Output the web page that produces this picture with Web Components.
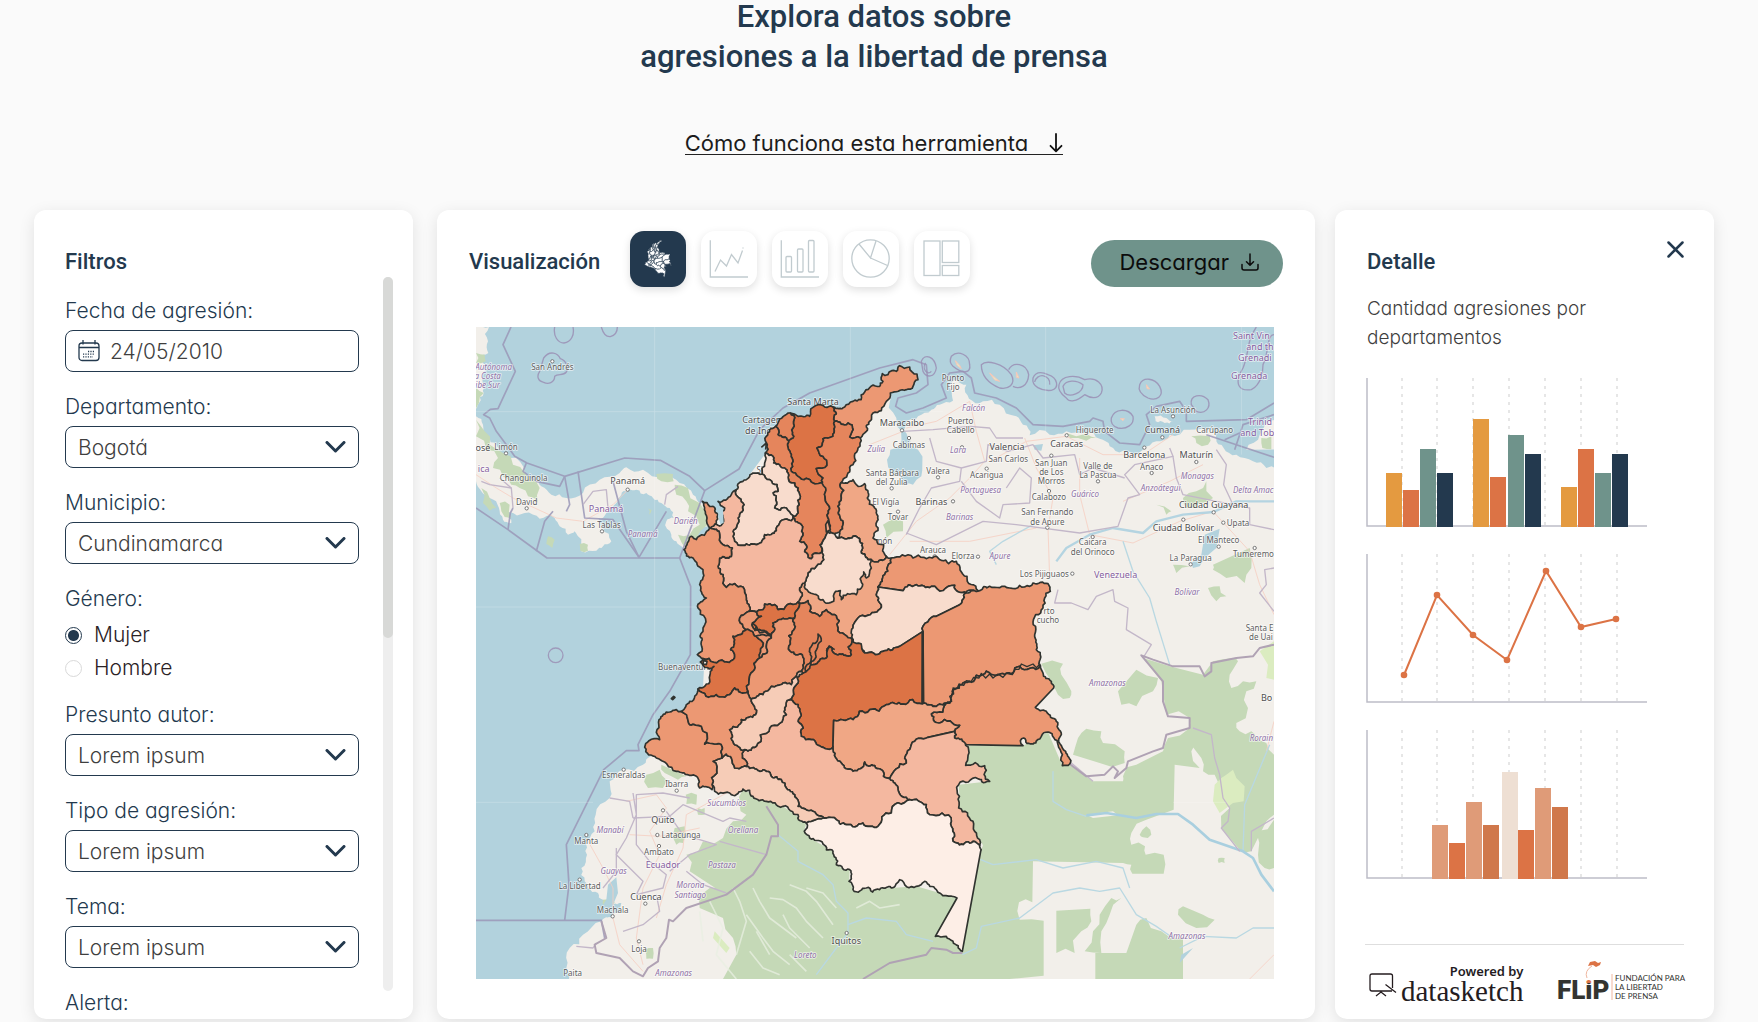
<!DOCTYPE html>
<html lang="es">
<head>
<meta charset="utf-8">
<meta name="viewport" content="width=device-width, initial-scale=1">
<title>Explora datos sobre agresiones a la libertad de prensa</title>
<style>
  body {
    margin: 0;
    background: #fafafa;
    color: #3f3f3f;
    font-family: Inter, "Noto Sans", sans-serif;
    font-feature-settings: "cv11";
    --navy: #23394e;
    --heading: Roboto, "Liberation Sans", sans-serif;
  }
</style>
</head>
<body>
<explorer-page></explorer-page>
<script>
const define = (name, html, setup) => {
  const template = document.createElement('template');
  template.innerHTML = html;
  customElements.define(name, class extends HTMLElement {
    constructor() {
      super();
      this.attachShadow({ mode: 'open' }).append(template.content.cloneNode(true));
    }
    connectedCallback() {
      if (setup && !this.ready) { this.ready = true; setup(this, this.shadowRoot); }
    }
  });
};

/* ---------- Departments of Colombia: fill, then outline ---------- */
const A = '#ec9873', B = '#e5855c', C = '#dc7345', D = '#f0a785', E = '#f4b8a0', F = '#f8dccd', G = '#f6ccb7', H = '#fdeee6';
const departments = [
  [A, '1090,257 1125,257 1150,240 1185,212 1230,195 1240,180 1238,157 1255,160 1266,148 1280,150 1290,133 1320,137 1342,158 1345,175 1330,195 1310,205 1262,215 1250,240 1235,268 1210,275 1200,300 1190,330 1172,350 1140,347 1150,325 1135,305 1095,300'],
  [C, '962,275 985,285 1020,285 1030,258 1045,250 1065,257 1090,257 1095,300 1090,345 1060,352 1042,380 1060,405 1072,432 1040,442 1060,470 1068,500 1030,485 985,465 965,450 970,420 965,400 955,378 957,358 972,345 973,295'],
  [B, '962,275 925,305 918,315 925,340 957,358 972,345 973,295'],
  [B, '918,315 900,325 890,345 893,370 887,395 910,405 912,425 945,440 955,455 958,480 985,500 992,525 985,575 970,583 995,610 990,660 1010,672 1015,708 1025,712 1058,688 1062,655 1075,632 1078,600 1075,550 1068,500 1030,485 985,465 965,450 970,420 965,400 955,378 957,358 925,340'],
  [B, '1095,300 1135,305 1150,325 1140,347 1172,350 1165,380 1150,430 1125,470 1113,485 1115,530 1105,555 1112,590 1120,610 1110,632 1080,628 1078,600 1075,550 1068,500 1060,470 1040,442 1072,432 1060,405 1042,380 1060,352 1090,345'],
  [D, '1113,485 1150,475 1160,490 1185,487 1193,530 1215,560 1222,600 1210,650 1225,668 1242,670 1250,705 1215,722 1205,715 1175,695 1170,660 1150,645 1110,650 1110,632 1120,610 1112,590 1105,555 1115,530'],
  [D, '1005,785 1015,755 1040,735 1062,715 1058,688 1062,655 1110,650 1150,645 1170,660 1175,695 1205,715 1215,722 1250,705 1265,710 1245,760 1225,797 1220,820 1235,850 1222,872 1165,890 1150,920 1148,955 1125,940 1105,920 1095,880 1070,865 1050,885 1020,870 1015,838 985,842 990,800'],
  [F, '1075,632 1110,650 1150,645 1170,660 1175,695 1205,715 1205,740 1190,770 1182,752 1178,795 1160,820 1115,835 1112,808 1098,810 1092,840 1060,835 1040,820 1012,805 1005,785 1015,755 1040,735 1062,715 1058,688 1062,655'],
  [F, '887,395 910,405 912,425 945,440 955,455 958,480 985,500 992,525 985,575 970,583 950,560 915,560 910,515 925,510 922,490 900,475 878,458 885,425'],
  [F, '878,458 850,455 820,480 800,505 808,530 823,550 805,590 790,630 795,660 820,672 860,670 885,640 920,628 930,605 965,598 970,583 950,560 915,560 910,515 925,510 922,490 900,475'],
  [E, '800,505 785,520 745,540 765,560 760,605 745,612 722,620 750,640 788,680 785,705 750,710 745,735 762,770 770,798 820,797 830,830 838,870 855,870 880,865 885,848 915,850 925,865 985,842 990,800 1005,785 1015,755 1040,735 1062,715 1058,688 1025,712 1015,708 1010,672 990,660 995,610 970,583 965,598 930,605 920,628 885,640 860,670 820,672 795,660 790,630 805,590 823,550 808,530'],
  [A, '698,540 720,555 745,580 740,605 722,620 750,640 788,680 785,705 750,710 745,735 762,770 770,798 820,797 830,830 838,870 810,890 812,905 830,925 812,940 790,945 783,985 795,1005 765,1022 700,1012 683,1000 697,990 695,960 700,930 685,860 710,830 690,790 700,745 670,710 643,685 665,645 680,655 720,620 712,590'],
  [C, '885,848 915,850 925,865 985,842 975,890 945,893 910,905 905,940 870,925 855,925 848,905 875,885 855,870 880,865'],
  [A, '838,870 855,870 875,885 848,905 855,925 870,925 905,940 905,950 860,945 830,925 812,905 810,890'],
  [C, '830,925 860,945 870,1010 850,1050 838,1080 835,1110 795,1100 780,1120 740,1120 685,1103 720,1075 722,1050 733,1035 705,1038 692,1022 700,1012 765,1022 795,1005 783,985 790,945 812,940'],
  [A, '860,945 905,950 890,975 892,995 870,1010'],
  [A, '905,940 910,905 945,893 975,890 968,930 962,990 998,1000 995,1050 965,1090 940,1085 905,1095 880,1120 845,1133 835,1110 838,1080 850,1050 870,1010 892,995 890,975 905,950'],
  [B, '985,842 1015,838 1020,870 1050,885 1070,865 1095,880 1105,920 1125,940 1148,955 1145,1000 1110,998 1078,975 1070,1010 1030,1030 1000,1055 995,1050 998,1000 962,990 968,930 975,890'],
  [B, '1045,938 1052,945 1045,970 1038,1000 1022,1045 1008,1050 1022,1000 1030,965'],
  [A, '1265,710 1330,710 1395,705 1415,717 1460,720 1492,765 1525,808 1490,815 1455,792 1385,795 1340,790 1300,808 1225,797 1245,760'],
  [F, '1225,797 1300,808 1340,790 1385,795 1455,792 1490,815 1470,850 1400,885 1360,930 1290,975 1245,988 1200,993 1185,995 1150,960 1150,920 1165,890 1222,872 1235,850 1220,820'],
  [A, '1490,815 1530,808 1560,795 1620,800 1680,795 1690,785 1735,787 1742,810 1725,830 1720,860 1698,880 1695,940 1700,985 1712,1033 1650,1035 1630,1055 1580,1062 1520,1062 1480,1085 1450,1105 1440,1145 1400,1155 1362,1148 1360,930 1400,885 1470,850'],
  [C, '1148,955 1185,995 1200,993 1245,988 1290,975 1360,930 1358,1148 1300,1148 1250,1150 1200,1165 1150,1195 1092,1197 1090,1275 1060,1278 1025,1255 995,1245 985,1200 985,1150 960,1135 980,1090 1000,1055 1030,1030 1070,1010 1078,975 1110,998 1145,1000'],
  [A, '1712,1033 1720,1055 1745,1080 1752,1100 1697,1158 1730,1170 1760,1200 1775,1240 1788,1290 1800,1328 1778,1333 1765,1270 1735,1232 1715,1245 1690,1268 1672,1266 1662,1250 1652,1258 1660,1273 1490,1270 1455,1250 1455,1230 1470,1212 1410,1205 1385,1178 1440,1145 1450,1105 1480,1085 1520,1062 1580,1062 1630,1055 1650,1035'],
  [D, '1092,1197 1150,1195 1200,1165 1250,1150 1300,1148 1358,1148 1400,1155 1440,1145 1385,1178 1410,1205 1470,1212 1455,1230 1375,1248 1325,1270 1310,1325 1260,1372 1235,1345 1215,1333 1185,1322 1150,1350 1115,1325 1090,1285 1090,1275'],
  [E, '1455,1230 1455,1250 1488,1272 1488,1332 1545,1333 1560,1380 1525,1372 1467,1390 1467,1460 1510,1500 1515,1530 1530,1555 1530,1572 1510,1560 1490,1562 1450,1560 1445,1500 1380,1480 1370,1450 1320,1435 1285,1405 1260,1372 1310,1325 1325,1270 1375,1248'],
  [E, '985,1150 960,1135 945,1160 950,1180 900,1220 860,1275 825,1285 818,1310 830,1335 870,1350 905,1365 935,1375 950,1400 980,1430 985,1455 1030,1470 1070,1490 1100,1495 1130,1510 1180,1505 1225,1515 1265,1475 1320,1435 1285,1405 1260,1372 1235,1345 1215,1333 1185,1322 1150,1350 1115,1325 1090,1285 1090,1275 1060,1278 1025,1255 995,1245 985,1200'],
  [H, '1010,1505 1070,1490 1100,1495 1130,1510 1180,1505 1225,1515 1265,1475 1320,1435 1370,1450 1380,1480 1445,1500 1450,1560 1490,1562 1510,1560 1530,1572 1533,1590 1478,1890 1450,1860 1430,1845 1397,1845 1462,1730 1400,1705 1365,1680 1340,1695 1290,1675 1265,1700 1230,1705 1190,1700 1150,1705 1138,1680 1140,1645 1100,1630 1090,1590 1060,1568 1020,1550'],
  [G, '730,1320 757,1310 770,1298 785,1310 795,1340 830,1335 870,1350 905,1365 935,1375 950,1400 980,1430 985,1455 1030,1470 1070,1490 1010,1505 985,1480 940,1455 890,1440 850,1425 820,1403 785,1420 735,1410 727,1390'],
  [A, '635,1170 620,1165 600,1172 568,1195 562,1225 570,1255 538,1258 525,1278 560,1310 620,1350 665,1362 690,1400 727,1405 727,1390 730,1320 757,1310 757,1275 735,1268 705,1268 712,1235 695,1215 660,1210'],
  [A, '685,1103 740,1120 780,1120 795,1100 835,1110 845,1133 858,1180 815,1195 780,1225 790,1260 825,1285 818,1310 830,1335 795,1340 785,1310 770,1298 757,1310 757,1275 735,1268 705,1268 712,1235 695,1215 660,1210 635,1170 660,1140'],
  [G, '845,1133 880,1120 905,1095 940,1085 965,1090 995,1050 1000,1055 980,1090 960,1135 945,1160 950,1180 900,1220 860,1275 825,1285 790,1260 780,1225 815,1195 858,1180']
];
const fixed = n => Math.round(n * 10) / 10;
/* Splits each edge at a displaced midpoint. The shift depends only on the two
   end points, so the border of two neighbours stays the same line. */
const roughen = (points, depth) => {
  if (!depth) return points;
  const out = [];
  points.forEach((p, i) => {
    const q = points[(i + 1) % points.length];
    out.push(p);
    const len = Math.hypot(q[0] - p[0], q[1] - p[1]);
    if (len < 9 || len > 75) return;
    const flip = p[0] < q[0] || (p[0] === q[0] && p[1] < q[1]);
    const [a, b] = flip ? [p, q] : [q, p];
    const s = Math.sin(a[0] * 12.9898 + a[1] * 78.233 + b[0] * 37.719 + b[1] * 4.581) * 43758.5453;
    const k = ((s - Math.floor(s)) - 0.5) * 0.5;
    out.push([fixed((a[0] + b[0]) / 2 - (b[1] - a[1]) * k), fixed((a[1] + b[1]) / 2 + (b[0] - a[0]) * k)]);
  });
  return roughen(out, depth - 1);
};
const outline = (text, depth) => 'M' + roughen(text.trim().split(/\s+/).map(p => p.split(',').map(Number)), depth).map(p => p.join(' ')).join('L') + 'Z';
const departmentPaths = depth => departments.map(([fill, pts]) => `<path fill="${fill}" d="${outline(pts, depth)}"/>`).join('');

/* ---------- Base map ---------- */
const land = [
  '19,17 58,17 55,60 56,95 40,100 46,130 40,160 47,190 42,215 28,245 19,262',
  '19,285 40,310 55,345 80,370 120,410 165,455 190,470 215,495 245,520 290,530 340,515 390,475 450,455 470,438 520,445 580,460 630,485 670,520 695,545 715,590 715,615 680,650 655,690 640,680 620,660 605,640 590,600 612,590 600,560 575,545 550,530 530,515 500,505 475,508 455,520 440,545 410,575 385,590 400,620 425,660 400,675 380,688 335,690 325,645 315,630 295,640 270,615 255,590 210,592 165,575 120,572 125,605 100,595 88,560 60,530 35,510 19,480',
  '900,380 1120,255 1230,200 1266,222 1280,290 1302,330 1312,300 1345,285 1385,265 1410,250 1450,238 1440,200 1462,175 1490,190 1498,232 1540,240 1590,250 1640,285 1660,310 1680,342 1740,340 1790,330 1850,335 1890,352 1920,375 1960,388 2020,385 2060,360 2100,340 2160,325 2225,325 2240,350 2262,380 2300,400 2350,420 2390,440 2450,452 2450,2000 280,2000 290,1940 300,1880 340,1840 395,1800 425,1788 455,1745 430,1750 400,1735 385,1715 355,1700 345,1680 335,1640 352,1600 340,1560 375,1530 378,1480 420,1430 420,1380 460,1345 520,1330 545,1305 700,1100 720,700 720,620',
  '2330,385 2370,340 2385,310 2440,300 2440,384', '2055,285 2090,290 2112,300 2085,305 2058,300'
];
const green = [
  '19,95 45,100 48,120 19,125', '19,200 42,215 28,245 19,262',
  '19,295 45,330 60,370 100,395 130,430 165,455 190,470 210,500 205,545 175,525 150,500 125,490 100,465 70,440 85,410 50,385 19,345',
  '35,500 60,530 80,560 60,568 40,545', '90,545 120,550 125,590 95,570',
  '235,645 255,655 248,680 230,668', '560,458 610,458 612,480 575,480', '615,490 655,500 690,545 712,590 712,612 680,650 655,690 625,640 660,640 690,610 655,570 650,540 620,520', '330,668 355,670 355,688 332,688', '535,560 546,565 538,580',
  '1790,335 1850,337 1880,350 1850,358 1800,350', '2140,530 2180,510 2210,480 2230,530 2190,545 2150,560', '2230,730 2340,680 2345,740 2325,785 2270,770 2230,745', '2215,800 2250,795 2270,825 2240,840', '2165,345 2220,345 2215,370 2180,365', '1240,610 1300,600 1300,630 1250,650', '2060,550 2105,570 2090,580', '2375,350 2405,345 2405,384 2378,380', '2110,730 2160,735 2120,755',
  '530,1360 570,1345 590,1375 580,1400 535,1400', '575,1330 650,1365 625,1375 585,1355', '648,1420 682,1420 680,1450 650,1448', '685,1460 705,1460 705,1480 685,1480', '615,1520 645,1515 640,1565 620,1570', '525,1885 550,1880 550,1912 530,1912', '400,1735 430,1725 435,1745 405,1755',
  '820,1405 890,1440 940,1455 1010,1505 1020,1550 1090,1590 1100,1630 1140,1645 1150,1705 1265,1700 1340,1695 1462,1730 1397,1845 1430,1845 1478,1890 1533,1590 1530,1555 1467,1460 1467,1390 1560,1380 1488,1332 1488,1272 1660,1273 1735,1232 1778,1333 1800,1330 1870,1380 1960,1380 1960,1365 2000,1330 2080,1290 2095,1250 2160,1220 2160,1190 2090,1180 2075,1080 2020,1010 2100,1035 2200,1060 2230,1020 2290,1010 2305,1020 2280,1060 2285,1100 2320,1080 2360,1080 2330,1110 2335,1160 2300,1205 2310,1230 2345,1230 2360,1250 2390,1265 2413,1300 2413,1480 2390,1500 2345,1590 2310,1585 2255,1520 2280,1460 2235,1360 2200,1350 2195,1310 2170,1240 2165,1290 2190,1340 2115,1330 2112,1465 2030,1495 1985,1535 1985,1570 2026,1575 2028,1600 2082,1600 2082,1657 1988,1657 1985,1630 1960,1625 1690,1620 1688,1743 1648,1743 1650,1795 1722,1798 1722,1963 1620,1973 760,1973 800,1900 790,1850 760,1790 690,1760 680,1720 720,1700 760,1715 660,1650 650,1600 700,1560 760,1550 790,1500 830,1480 810,1450',
  '1715,1027 1780,1027 1775,1060 1805,1110 1800,1130 1765,1120 1745,1080', '1945,1110 2000,1045 2065,1070 2050,1110 2000,1155 1955,1150', '1825,1250 1850,1222 1895,1230 1900,1265 1965,1290 1965,1325 1890,1325 1810,1300',
  '1760,1768 1862,1762 1865,1800 1835,1830 1815,1895 1760,1895', '1925,1730 1955,1730 1920,1780 1895,1830 1895,1895 1845,1890 1870,1830 1890,1780', '1877,1895 1970,1895 2000,1810 2030,1790 2075,1830 2140,1850 2140,1973 1877,1973', '2140,1755 2200,1780 2235,1795 2180,1820 2125,1780', '2360,1530 2413,1495 2413,1640 2385,1640 2365,1600', '2010,1540 2030,1515 2045,1540 2020,1548', '2247,1610 2265,1610 2265,1625 2247,1625'
];
const line = (stroke, width, list, extra = '') => `<g fill="none" stroke="${stroke}" stroke-width="${width}" stroke-linejoin="round" ${extra}>${list.map(d => `<path d="${d}"/>`).join('')}</g>`;
const sea = [
  'M124 17L100 70L137 150L85 262L62 264L42 280L60 290L80 330L110 370L135 405L172 425L285 465L465 410L572 417L660 465L705 508L808 443L870 325L940 260L1020 215L1230 140L1330 115L1370 130L1375 190L1340 215L1285 230L1278 255L1310 275L1360 260L1430 230L1415 190L1440 155L1480 150L1505 170L1515 215L1580 230L1640 260L1680 300L1690 310L1780 315L1860 300L1870 290L1900 300L1905 330L1950 365L2010 370L2040 310L2030 280L2060 255L2130 240L2150 270L2150 300L2330 295L2413 245',
  'M19 560L115 625L232 710L630 710L705 508', 'M630 710L663 795L662 1000L600 1110L550 1180L505 1270L508 1288L470 1288L402 1345L290 1570L298 1690L285 1797', 'M19 1797H395L405 1850', 'M115 625L122 575L130 560', 'M285 465L300 550L290 570', 'M325 450L345 590L430 595L508 708L590 570', 'M430 480L470 630L508 708', 'M200 690L225 600L250 570', 'M170 425L160 450L200 480L270 495L285 465',
  'M2295 385L2320 310L2413 280', 'M2265 355L2310 335', 'M2210 340L2413 408'
];
const rings = [
  'M255 17C250 45 265 65 283 65C305 62 315 40 310 17', 'M395 17C400 35 410 47 422 46C437 42 443 30 443 17', 'M222 110C240 85 265 95 272 112C290 118 297 140 290 152C280 165 265 155 255 165C255 185 235 190 222 183C205 180 200 165 210 150Z',
  'M1355 120C1365 95 1395 105 1400 140C1395 170 1370 170 1360 150Z', 'M1368 125A12 16 0 1 0 1385 150', 'M1445 105C1465 85 1500 100 1500 130C1505 155 1480 160 1450 135C1440 125 1440 115 1445 105Z', 'M1535 130C1550 115 1600 125 1625 160C1640 190 1615 205 1590 200C1555 185 1535 160 1535 130Z', 'M1617 145C1630 120 1670 125 1677 160C1675 195 1650 205 1630 195', 'M1690 170C1700 145 1725 155 1735 160C1765 170 1770 200 1745 207C1715 210 1685 195 1690 170Z', 'M1768 190C1775 160 1820 160 1845 175C1880 165 1905 190 1895 215C1885 235 1860 230 1845 220C1820 240 1800 245 1790 230C1770 215 1765 200 1768 190Z', 'M1780 195C1790 175 1820 175 1840 190C1840 215 1800 230 1785 215Z',
  'M2010 190C2020 165 2055 170 2070 195C2085 225 2060 240 2035 230C2015 220 2005 205 2010 190Z', 'M1925 290C1935 260 1975 260 1990 285C1995 310 1970 325 1945 320C1930 315 1922 305 1925 290Z', 'M2165 250C2160 220 2195 215 2215 235C2225 260 2205 280 2180 270Z', 'M2360 17C2330 60 2340 90 2320 140C2290 190 2310 210 2345 205C2375 190 2380 150 2380 130C2400 90 2390 40 2413 40',
  'M258 1002m-22 0a22 22 0 1 0 44 0a22 22 0 1 0 -44 0', 'M1695 182A12 12 0 1 1 1740 190'
];
const borders = [
  'M1765 805L1755 845L1805 845L1855 865L1880 825L1930 805L1935 840L1975 860L1970 925L2045 970L2020 1010',
  'M1300 330L1390 325L1500 315L1560 320L1580 350L1660 350', 'M1380 350L1400 420L1475 440L1470 480L1385 500L1350 560L1310 640', 'M1475 440L1550 420L1555 370L1615 390L1690 370', 'M1475 480L1520 540L1590 590L1600 550L1680 545L1685 470L1650 440L1610 500', 'M1310 635L1400 670L1540 600L1640 610L1830 635L1945 615L1975 530L2010 520L1965 460L1995 430L2110 405L2100 380', 'M1690 370L1720 410L1815 400L1830 460L1870 440L1965 470', 'M2110 405L2120 470L2140 520L2290 550L2262 490L2270 430L2240 385', 'M2290 550L2340 560L2340 610L2413 625', 'M2413 740L2385 745L2390 790L2370 815L2413 870',
  'M490 1415L500 1480L470 1550L440 1600L480 1640L520 1680L500 1720L580 1700L590 1660L540 1620L500 1570L500 1420L580 1415L660 1430', 'M490 1490L600 1485L640 1450L760 1500L780 1490L830 1500', 'M590 1470L640 1540L740 1570L660 1600L600 1650', 'M750 1560L890 1600', 'M650 1650L700 1690L770 1715', 'M420 1430L480 1440L490 1490', 'M400 1700L440 1650L440 1580', 'M460 1830L520 1810L570 1770L560 1720',
  'M320 1875L370 1880L380 1865', 'M130 560L125 500L90 470', 'M340 550L370 510L410 505L415 560L460 560', 'M585 550L590 520L625 495', 'M35 480L60 490L125 500', 'M1870 1380L1805 1325', 'M2170 1220L2225 1240L2235 1310L2250 1360L2260 1430L2280 1460L2275 1500L2255 1520L2310 1590', 'M2345 1590L2345 1530L2413 1490'
];
const bold = [
  'M890 1455L925 1510L925 1545L905 1545L890 1600L850 1660L770 1720L650 1760L610 1800L598 1795L590 1850L570 1880L565 1920L535 1940L520 1965L490 1950L450 1910L380 1895L375 1870L410 1850L395 1800',
  'M1180 1973L1260 1925L1370 1900L1385 1880L1430 1885L1450 1895L1478 1895', 'M1800 1328L1850 1365L1905 1360L1930 1335L1945 1350L1935 1370L1970 1340L1975 1320L2050 1290L2080 1280L2090 1240L2160 1220L2160 1190L2095 1185L2080 1140L2080 1080L2015 1002L2050 1015L2110 1035L2190 1035L2205 1065L2225 1050L2225 1025L2300 1010L2350 1005L2370 980L2413 970'
];
const roads = [
  'M19 460L80 500L130 530L260 590L340 600L430 550L475 505', 'M1310 320L1400 300L1500 240L1520 330L1545 420L1500 470L1440 530L1340 600L1260 700', 'M1200 370L1300 330', 'M1665 350L1700 440L1750 530L1735 620L1740 770', 'M1560 420L1670 360L1790 345L1900 400L2020 400L2110 340', 'M1830 410L1830 520L1860 640L1990 665L2130 600L2230 570L2340 690L2370 790L2413 880', 'M1960 540L2100 480L2200 430', 'M1320 660L1500 660L1700 620', 'M470 1440L560 1420L590 1460L540 1530L570 1600L520 1700L500 1850L520 1930', 'M350 1550L400 1640L430 1700L430 1790L450 1870L520 1950', 'M560 1790L590 1690L640 1580L650 1480L780 1410', 'M480 1540L570 1545L690 1520', 'M2413 1200L2390 1290', 'M2340 1973L2413 1900'
];
const rivers = [
  'M925 1540L985 1590L985 1620L1060 1660L1090 1690L1100 1740L1135 1775L1135 1835L1100 1880L1040 1960', 'M1135 1810L1190 1790L1280 1800L1310 1840L1390 1860', 'M1478 1900L1520 1880L1535 1815L1650 1790L1690 1760L1750 1715L1830 1700L1890 1710L1950 1700L2000 1780L2060 1815L2110 1850', 'M1533 1615L1570 1630L1700 1615L1780 1640L1880 1620L1960 1640L1980 1700', 'M1750 1350L1750 1440L1790 1465L1850 1485', 'M2413 1820L2350 1820L2300 1850L2200 1845L2130 1880', 'M1690 610L1600 660L1560 690L1580 730', 'M2320 1590L2325 1450L2400 1270', 'M1960 660L1990 750L2040 830L2060 900L2100 1030'
];
const cleared = ['M960 1690L1010 1710L1040 1740L1090 1810', 'M900 1730L940 1735L980 1760L1010 1800L1060 1850', 'M850 1700L870 1740L900 1790L980 1850', 'M830 1780L880 1850L910 1890L960 1930', 'M790 1700L810 1740L830 1800L800 1900', 'M720 1740L760 1820L740 1900L800 1973', 'M860 1830L900 1900', 'M690 1770L700 1860', 'M960 1900L1010 1950', 'M1010 1700L1060 1715L1100 1760', 'M940 1780L960 1820L1020 1880', 'M840 1890L880 1940L930 1960', 'M1160 1760L1200 1740L1230 1760L1290 1750'];
/* label: x, y, text, kind */
const labels = [
  [248,146,'San Andrés','s'],[72,145,'Autónoma','r'],[54,172,'a Costa','r'],[54,199,'ibe Sur','r'],[40,388,'osé','m'],[109,386,'Limón','s'],[42,453,'ica','q'],[162,480,'Changuinola','s'],[171,551,'David','s'],[474,489,'Panamá','m'],[409,571,'Panamá','q'],[396,621,'Las Tablas','s'],[519,648,'Panamá','r'],[648,608,'Darién','r'],
  [1030,251,'Santa Marta','m'],[884,304,'Cartagena','m'],[884,337,'de Indias','m'],[870,456,'Si','s'],[645,1045,'Buenaventura','s'],
  [2290,52,'Saint Vin','e'],[2330,86,'and th','e'],[2305,120,'Grenadi','e'],[2284,172,'Grenada','e'],[1450,179,'Punto','s'],[1450,206,'Fijo','s'],[1512,268,'Falcón','r'],[1297,314,'Maracaibo','m'],[1318,380,'Cabimas','s'],[1220,391,'Zulia','r'],[1465,396,'Lara','r'],[1473,309,'Puerto','s'],[1473,336,'Cabello','s'],[1612,386,'Valencia','m'],[1616,422,'San Carlos','s'],[1791,377,'Caracas','m'],[1875,335,'Higuerote','s'],[2110,275,'La Asunción','s'],[2078,335,'Cumaná','m'],[2235,335,'Carúpano','s'],[2335,310,'Trinid','e'],[2312,344,'and Tob','e'],
  [1405,459,'Valera','s'],[1268,465,'Santa Bárbara','s'],[1266,492,'del Zulia','s'],[1551,470,'Acarigua','s'],[1745,435,'San Juan','s'],[1745,462,'de Los','s'],[1745,489,'Morros','s'],[1885,442,'Valle de','s'],[1885,470,'La Pascua','s'],[2024,411,'Barcelona','m'],[2180,411,'Maturín','m'],[2046,446,'Anaco','s'],[2183,473,'Monagas','r'],[1533,514,'Portuguesa','r'],[1846,527,'Guárico','r'],[2073,508,'Anzoátegui','r'],[2290,515,'Delta Amac','R'],[1248,550,'El Vigía','s'],[1385,550,'Barinas','m'],[1738,537,'Calabozo','s'],[2232,561,'Ciudad Guayana','m'],[1285,597,'Tovar','s'],[1470,596,'Barinas','r'],[1733,582,'San Fernando','s'],[1733,610,'de Apure','s'],[2141,628,'Ciudad Bolívar','m'],[2305,614,'Upata','s'],[2247,666,'El Manteco','s'],[2290,706,'Tumeremo','S'],[2163,720,'La Paragua','s'],[1869,672,'Caicara','s'],[1869,700,'del Orinoco','s'],[1390,694,'Arauca','s'],[1480,714,'Elorza','s'],[1591,712,'Apure','r'],[1724,767,'Los Pijiguaos','s'],[1938,770,'Venezuela','q'],[2152,820,'Bolívar','r'],[1738,878,'rto','s'],[1735,905,'cucho','s'],[2328,928,'Santa E','S'],[2338,955,'de Uai','S'],[1242,668,'món','s'],
  [1913,1094,'Amazonas','r'],[2374,1138,'Bo','M'],[2340,1260,'Rorain','R'],[2152,1853,'Amazonas','r'],
  [462,1369,'Esmeraldas','s'],[621,1398,'Ibarra','s'],[771,1453,'Sucumbíos','r'],[580,1505,'Quito','m'],[421,1535,'Manabí','r'],[634,1550,'Latacunga','s'],[820,1536,'Orellana','r'],[350,1568,'Manta','s'],[568,1600,'Ambato','s'],[580,1640,'Ecuador','q'],[757,1641,'Pastaza','r'],[432,1657,'Guayas','r'],[330,1702,'La Libertad','s'],[662,1701,'Morona','r'],[662,1729,'Santiago','r'],[529,1735,'Cuenca','m'],[429,1775,'Machala','s'],[508,1892,'Loja','s'],[1130,1868,'Iquitos','m'],[1007,1910,'Loreto','r'],[309,1965,'Paita','s'],[612,1965,'Amazonas','r']
];
const dots = [[248,120],[109,396],[171,561],[474,505],[397,630],[1297,327],[1318,350],[1477,378],[1405,468],[1551,442],[1745,403],[1791,342],[1885,480],[2024,379],[2110,285],[2078,348],[2180,422],[2046,455],[1266,501],[1450,540],[1738,509],[2232,573],[2141,595],[2261,604],[2247,676],[2355,680],[1869,647],[1285,571],[1525,706],[1808,757],[1733,619],[2163,729],[462,1345],[621,1408],[580,1467],[563,1541],[350,1541],[568,1574],[330,1675],[527,1747],[429,1785],[508,1860],[1131,1835],[1296,460],[1395,705]];

define('colombia-map', `
<style>
  :host { display: block; }
  svg { display: block; width: 100%; height: auto; }
  text { font-family: "Noto Sans", sans-serif; font-feature-settings: normal; text-anchor: middle; paint-order: stroke; stroke: #ffffff; stroke-opacity: .65; stroke-width: 5px; stroke-linejoin: round; }
  .s, .S { font-size: 24px; fill: #5e5e5e; }
  .m, .M { font-size: 27px; fill: #4f4f4f; }
  .r, .R { font-size: 24px; font-style: italic; fill: #8f72a6; }
  .q, .e { font-size: 27px; fill: #865f9f; }
  .e, .S, .M, .R { text-anchor: start; }
</style>
<svg viewBox="19 17 2394 1956" role="img" aria-label="Mapa de agresiones por departamento en Colombia"></svg>
`, (host, root) => {
  root.querySelector('svg').innerHTML = `
    <rect x="19" y="17" width="2394" height="1956" fill="#b2d2dd"/>
    <g fill="#f2efea">${land.map(p => `<path d="${outline(p, 2)}"/>`).join('')}</g>
    <g fill="#c5d9b7">${green.map(p => `<path d="${outline(p, 1)}"/>`).join('')}</g>
    <path fill="#f2efea" d="M1870 1365L1960 1365L1960 1378L1870 1378ZM1850 1480L1930 1470L1945 1482L1870 1490Z"/>
    <path fill="#dbecc0" d="M2270 1360L2290 1345L2300 1370L2325 1395L2322 1440L2290 1445L2250 1475L2230 1440L2235 1390L2255 1370ZM735 1830L780 1880L770 1895L730 1850ZM2370 990L2413 960L2413 1075L2390 1070L2395 1030Z"/>
    <g fill="#b2d2dd"><path d="${outline('1302,325 1315,350 1320,370 1345,385 1358,430 1355,465 1330,490 1305,492 1270,455 1252,415 1262,385 1290,370 1295,345', 1)}"/><path d="M1690 372L1720 368L1715 388L1695 385ZM2205 640L2250 622L2240 680L2205 710L2190 735L2170 740L2165 725L2195 700ZM415 1690L440 1668L445 1715L430 1750L415 1790L395 1760L410 1735ZM2170 1880L2130 1925L2135 1900Z"/></g>
    ${line('#e9f0e2', 5, cleared, 'opacity=".75"')}
    ${line('#f7cfc2', 3, roads, 'opacity=".8"')}
    ${line('#b9d8e2', 4, rivers)}
    ${line('#a9cfdf', 8, ['M1850 1482L1910 1475L2000 1490L2060 1478L2125 1478L2170 1510L2220 1555L2320 1590L2350 1610L2375 1660L2413 1710'])}
    ${line('#b4d4e1', 7, ['M1760 720L1790 680L1860 640L1930 620L2020 635L2060 600L2140 580L2232 572L2300 540L2413 540'])}
    ${line('#9b98b8', 5, sea, 'opacity=".85"')}
    ${line('#9b90b5', 4, rings, 'opacity=".85"')}
    ${line('#c3b7c9', 4, borders)}
    ${line('#b0a2b4', 6, bold)}
    <g fill="#e6e8c4" stroke="#f4c7b8" stroke-width="3"><path d="M1457 118L1470 132L1475 142L1462 132ZM1560 155L1580 172L1590 180L1575 176ZM1640 152L1648 170L1640 168ZM2030 190L2040 203L2032 202ZM1952 292L1964 292L1960 298Z"/></g>
    ${line('#ffffff', 2, ['M555 17V1320', 'M1142 17V250', 'M1728 17V330', 'M2316 17V400', 'M19 271H930', 'M1350 271H1420', 'M19 857H690', 'M19 1443H370', 'M2110 1443H2270'], 'opacity=".3"')}
    <g fill="#fff" stroke="#777" stroke-width="3">${dots.map(([x, y]) => `<circle cx="${x}" cy="${y}" r="5"/>`).join('')}</g>
    ${labels.map(([x, y, t, k]) => `<text class="${k}" x="${x}" y="${y}">${t}</text>`).join('')}
    <g stroke="#30332f" stroke-width="5" stroke-linejoin="round">${departmentPaths(3)}
      <path fill="none" stroke-width="8" d="M1359 932V1148"/>
      <path fill="none" stroke-width="4" d="M1712 1027L1700 1039L1690 1028L1672 1036L1655 1028L1648 1044L1636 1044L1628 1060L1610 1056L1600 1068L1585 1058L1570 1070L1560 1058L1548 1070L1535 1056L1528 1070L1512 1068L1505 1080L1490 1078L1482 1092L1468 1088L1462 1102L1450 1100L1452 1118L1440 1125L1446 1140L1432 1144"/>
      <path d="M605 1132L612 1125L616 1128L609 1135Z"/><path fill="#f0a785" d="M1070 632L1068 610L1075 598L1082 625Z"/><path fill="#f2efea" d="M702 1018L712 1020L710 1030L700 1028Z"/>
      <path fill="#b2d2dd" stroke="none" d="M748 560L760 565L762 605L752 608L745 585Z"/>
      <path fill="none" d="M875 378L890 365L888 385M1070 990L1080 975L1095 985M860 915L870 935L890 930L905 945M848 905L860 915L855 930"/>
    </g>`;
});

define('panel-card', `
<style>
  :host { display: flex; flex-direction: column; box-sizing: border-box; min-width: 0; overflow: hidden; background: #fff; border-radius: 12px; box-shadow: 0 4px 16px rgba(0,0,0,.1); }
</style>
<slot></slot>`);

define('panel-title', `
<style>
  :host { display: block; }
  h2 { margin: 0; font: 500 22px/34px var(--heading); color: var(--navy); }
</style>
<h2><slot></slot></h2>`);

define('select-field', `
<style>
  :host { display: block; }
  label { display: block; margin-bottom: 7px; font-size: 21px; font-weight: 300; line-height: 24px; color: var(--navy); }
  .box { display: grid; align-items: center; }
  select, svg { grid-area: 1 / 1; }
  select { appearance: none; box-sizing: border-box; width: 100%; height: 42px; padding: 0 44px 0 12px; border: 1px solid var(--navy); border-radius: 8px; background: #fff; color: #3f3f3f; font: inherit; font-size: 21px; font-weight: 300; }
  svg { justify-self: end; margin-right: 13px; pointer-events: none; }
</style>
<label for="field"></label>
<div class="box">
  <select id="field"><option></option></select>
  <svg width="21" height="12" viewBox="0 0 21 12" fill="none" stroke="#23394e" stroke-width="3" stroke-linecap="round" stroke-linejoin="round"><path d="M2 1.5L10.500 10L19 1.500"/></svg>
</div>`, (host, root) => {
  root.querySelector('label').textContent = host.getAttribute('label');
  root.querySelector('option').textContent = host.getAttribute('value');
});

define('date-field', `
<style>
  :host { display: block; }
  label { display: block; margin-bottom: 7px; font-size: 21px; font-weight: 300; line-height: 24px; color: var(--navy); }
  .box { display: flex; align-items: center; gap: 10px; box-sizing: border-box; height: 42px; padding: 0 12px; border: 1px solid var(--navy); border-radius: 8px; }
  input { flex: 1; min-width: 0; padding: 0; border: 0; outline: 0; background: none; color: #3f3f3f; font: inherit; font-size: 21px; font-weight: 300; }
</style>
<label for="date">Fecha de agresión:</label>
<div class="box">
  <svg width="22" height="22" viewBox="0 0 22 22" fill="none" stroke="#23394e" stroke-width="1.300"><rect x="1" y="3" width="20" height="17.500" rx="3"/><path d="M1 7.500H21M5 0V4.500M17 0V4.500"/><path stroke-dasharray="1.200 1.200" d="M10 11.500H17M5 14.200H17M5 16.800H15"/></svg>
  <input id="date" type="text" value="24/05/2010">
</div>`);

define('gender-field', `
<style>
  :host { display: block; }
  fieldset { margin: 0; padding: 0; border: 0; min-width: 0; }
  legend { padding: 0; margin-bottom: 12px; font-size: 21px; font-weight: 300; line-height: 24px; color: var(--navy); }
  .options { display: grid; gap: 9px; }
  label { display: flex; align-items: center; gap: 12px; font-size: 21px; line-height: 24px; color: #2b2226; font-weight: 300; }
  input { appearance: none; box-sizing: border-box; width: 17px; height: 17px; margin: 0; border: 1px solid #d9d9d9; border-radius: 50%; }
  input:checked { border-color: var(--navy); background: radial-gradient(circle, var(--navy) 5px, #fff 6px); }
</style>
<fieldset>
  <legend>Género:</legend>
  <div class="options">
    <label><input type="radio" name="genero" checked>Mujer</label>
    <label><input type="radio" name="genero">Hombre</label>
  </div>
</fieldset>`);

define('filter-panel', `
<style>
  :host { display: flex; gap: 24px; flex: 1; padding: 35px 20px 0 31px; }
  .fields { flex: 1; min-width: 0; display: flex; flex-direction: column; gap: 23px; }
  panel-title { margin-bottom: -3px; }
  .last { font-size: 21px; font-weight: 300; line-height: 24px; color: var(--navy); }
  .track { width: 10px; margin: 32px 0 28px; border-radius: 5px; background: #eee; }
  .thumb { height: 361px; border-radius: 5px; background: #d8d9d7; }
</style>
<div class="fields">
  <panel-title>Filtros</panel-title>
  <date-field></date-field>
  <select-field label="Departamento:" value="Bogotá"></select-field>
  <select-field label="Municipio:" value="Cundinamarca"></select-field>
  <gender-field></gender-field>
  <select-field label="Presunto autor:" value="Lorem ipsum"></select-field>
  <select-field label="Tipo de agresión:" value="Lorem ipsum"></select-field>
  <select-field label="Tema:" value="Lorem ipsum"></select-field>
  <div class="last">Alerta:</div>
</div>
<div class="track"><div class="thumb"></div></div>`);

const toolIcons = {
  map: `<g transform="translate(3.500 6.500) scale(.021)" stroke="#23394e" stroke-width="26">${departmentPaths(0).replace(/fill="#\w+"/g, 'fill="#fff"')}</g>`,
  line: '<path d="M9.300 9.300V46H47M14 40.500L19.500 29L25.500 35L30.500 23.500L37 32L41.500 19.500M42 16.500V17.500"/>',
  bars: '<path d="M9.300 9.300V46H47"/><rect x="14" y="25.500" width="5.500" height="15.500" rx="1"/><rect x="25.500" y="18" width="5.500" height="23" rx="1"/><rect x="36.500" y="9.500" width="5.500" height="31.500" rx="1"/>',
  pie: '<circle cx="27.500" cy="27.500" r="18.700"/><path d="M16 13L27.500 27L33 10M27.500 27L44.500 34.500"/>',
  tree: '<rect x="10" y="10" width="16" height="34.500"/><rect x="28.300" y="10" width="16.500" height="21.500"/><rect x="28.300" y="34.500" width="16.500" height="10"/>'
};
define('chart-button', `
<style>
  :host { display: block; }
  button { display: block; width: 56px; height: 56px; padding: 0; border: 0; border-radius: 14px; background: #fff; box-shadow: 0 3px 8px rgba(0,0,0,.13); }
  :host([active]) button { background: var(--navy); }
  svg { display: block; width: 56px; height: 56px; fill: none; stroke: #c1cbcf; stroke-width: 1.3; }
</style>
<button type="button"><svg viewBox="0 0 56 56"></svg></button>`, (host, root) => {
  root.querySelector('svg').innerHTML = toolIcons[host.getAttribute('icon')];
  root.querySelector('button').setAttribute('aria-label', host.getAttribute('label'));
});

define('viz-panel', `
<style>
  :host { display: block; padding: 21px 32px 40px; }
  header { display: flex; align-items: flex-end; }
  panel-title { flex: 0 0 161px; padding-bottom: 8px; }
  .tools { display: flex; gap: 15px; }
  .download { display: flex; align-items: center; gap: 12px; height: 47px; margin-left: auto; padding: 0 24px 3px 28px; border: 0; border-radius: 24px; background: #6f938b; color: #0c0c0c; font: inherit; font-size: 22px; font-feature-settings: inherit; }
  colombia-map { margin: 40px 9px 0 7px; }
</style>
<header>
  <panel-title>Visualización</panel-title>
  <div class="tools">
    <chart-button icon="map" label="Mapa" active></chart-button>
    <chart-button icon="line" label="Líneas"></chart-button>
    <chart-button icon="bars" label="Barras"></chart-button>
    <chart-button icon="pie" label="Torta"></chart-button>
    <chart-button icon="tree" label="Treemap"></chart-button>
  </div>
  <button class="download" type="button">Descargar
    <svg width="18" height="18" viewBox="0 0 18 18" fill="none" stroke="#0c0c0c" stroke-width="1.500" stroke-linecap="round" stroke-linejoin="round"><path d="M9 1V12M5.500 8.700L9 12.200L12.500 8.700M1 11.500V15Q1 17 3 17H15Q17 17 17 15V11.500"/></svg>
  </button>
</header>
<colombia-map></colombia-map>`);

const Y = '#e49a40', O = '#dc7345', T = '#6f938b', N = '#23394e', P = '#df9b78', Q = '#d0784b';
const series = {
  grouped: [[20,95,Y],[37,112,O],[54,71,T],[71,95,N],[107,41,Y],[124,99,O],[142,57,T],[159,76,N],[195,109,Y],[212,71,O],[229,95,T],[246,76,N]],
  single: [[66,95,P],[83,113,O],[100,72,P],[117,95,Q],[136,42,'#eedfd3'],[152,100,O],[169,58,P],[186,77,Q]],
  trend: [[38,121],[71,41],[107,81],[141,106],[180,17],[215,73],[250,65]]
};
define('mini-chart', `
<style>
  :host { display: block; }
  svg { display: block; width: 281px; height: 149px; }
</style>
<svg viewBox="0 0 281 149"></svg>`, (host, root) => {
  const type = host.getAttribute('type');
  const data = series[type];
  root.querySelector('svg').innerHTML = `
    <g stroke="#dedede" stroke-width="1.500" stroke-dasharray="3 5">${[36,71,107,143,179,215,251].map(x => `<path d="M${x} 0V148"/>`).join('')}</g>
    <path d="M1 0V148H281" fill="none" stroke="#bdbdc7" stroke-width="1.500"/>
    ${type === 'trend'
      ? `<path fill="none" stroke="${O}" stroke-width="2" d="M${data.map(p => p.join(' ')).join('L')}"/>` + data.map(([x, y]) => `<circle cx="${x}" cy="${y}" r="3.300" fill="${O}"/>`).join('')
      : data.map(([x, y, c]) => `<rect x="${x}" y="${y}" width="16" height="${149 - y}" fill="${c}"/>`).join('')}`;
});

define('datasketch-logo', `
<style>
  :host { display: flex; align-items: flex-end; gap: 4px; color: #241c1f; }
  .words { display: flex; flex-direction: column; align-items: flex-end; }
  .by { font: 600 13px/14px "Noto Sans", sans-serif; }
  .name { font: 400 29px/26px "Liberation Serif", serif; }
  svg { margin-bottom: 7px; }
</style>
<svg width="28" height="24" viewBox="0 0 28 24" fill="none" stroke="#241c1f" stroke-width="1.300"><path d="M23.500 15V3Q23.500 1 21.500 1H3Q1 1 1 3V16Q1 18 3 18H23M16.500 11.500L27 19.500M7 23L12 19L17 23"/></svg>
<div class="words"><span class="by">Powered by</span><span class="name">datasketch</span></div>`);

define('flip-logo', `
<style>
  :host { display: block; }
  svg { display: block; overflow: visible; }
  .flip { font: 900 26px Roboto, sans-serif; fill: #333431; }
  .flip tspan { fill: url(#dot); }
  .small { font: 400 8px Lato, sans-serif; fill: #333431; }
</style>
<svg width="130" height="40" viewBox="0 0 130 40" role="img" aria-label="FLIP">
  <defs><linearGradient id="dot" gradientUnits="userSpaceOnUse" x1="0" y1="14" x2="0" y2="34"><stop offset=".42" stop-color="#dc7345"/><stop offset=".42" stop-color="#333431"/></linearGradient></defs>
  <text class="flip" x="0" y="38">FL<tspan>i</tspan>P</text>
  <path d="M30 17Q27 10 35 5" fill="none" stroke="#efb7a0" stroke-width="1"/>
  <path d="M33 1L38 0L41 2L44 1L43 4L39 6L36 4L31 5Z" fill="#dc7345"/>
  <path d="M55 13V39" stroke="#efb7a0" stroke-width="1"/>
  <text class="small" x="58" y="20">FUNDACIÓN PARA</text>
  <text class="small" x="58" y="29">LA LIBERTAD</text>
  <text class="small" x="58" y="38">DE PRENSA</text>
</svg>`);

define('detail-panel', `
<style>
  :host { display: flex; flex-direction: column; flex: 1; padding: 28px 30px 0 32px; }
  header { display: flex; justify-content: space-between; align-items: flex-start; }
  panel-title { padding-top: 7px; }
  .close { display: block; padding: 3px 0; border: 0; background: none; }
  .close svg { display: block; }
  p { margin: 15px 0 26px; font-size: 19px; font-weight: 300; line-height: 29px; max-width: 240px; }
  .charts { display: grid; gap: 27px; margin-left: -1px; }
  .foot { height: 75px; margin-top: auto; margin-left: -2px; }
  hr { margin: 0; border: 0; border-top: 1px solid #dedede; }
  .logos { display: flex; gap: 34px; padding: 16px 0 0 4px; height: 59px; box-sizing: border-box; }
</style>
<header>
  <panel-title>Detalle</panel-title>
  <button class="close" type="button" aria-label="Cerrar"><svg width="17" height="17" viewBox="0 0 17 17" stroke="#23394e" stroke-width="2.500" stroke-linecap="round"><path d="M1.500 1.500L15.500 15.500M15.500 1.500L1.500 15.500"/></svg></button>
</header>
<p>Cantidad agresiones por departamentos</p>
<div class="charts">
  <mini-chart type="grouped"></mini-chart>
  <mini-chart type="trend"></mini-chart>
  <mini-chart type="single"></mini-chart>
</div>
<div class="foot">
  <hr>
  <div class="logos"><datasketch-logo></datasketch-logo><flip-logo></flip-logo></div>
</div>`);

define('page-intro', `
<style>
  :host { display: flex; flex-direction: column; align-items: center; }
  h1 { margin: -3px 0 51px; text-align: center; font: 500 31px/40px var(--heading); color: var(--navy); }
  a { display: flex; align-items: center; gap: 21px; padding-top: 4px; border-bottom: 1px solid #222; color: #1c1c1c; font-size: 22px; line-height: 22px; text-decoration: none; margin-bottom: 55px; }
</style>
<h1>Explora datos sobre<br>agresiones a la libertad de prensa</h1>
<a href="#ayuda">Cómo funciona esta herramienta
  <svg width="14" height="20" viewBox="0 0 14 20" fill="none" stroke="#111" stroke-width="1.800" stroke-linecap="round" stroke-linejoin="round"><path d="M7 1V18M1.500 12.800L7 18.300L12.500 12.800"/></svg>
</a>`);

define('explorer-page', `
<style>
  :host { display: block; border-bottom: 1px solid #d6d6d6; overflow: hidden; }
  .wrap { padding: 0 44px 3px 34px; }
  main { display: flex; }
  .side { flex: 0 0 379px; }
  .main { flex: 1; margin: 0 20px 0 24px; }
</style>
<div class="wrap">
  <page-intro></page-intro>
  <main>
    <panel-card class="side"><filter-panel></filter-panel></panel-card>
    <panel-card class="main"><viz-panel></viz-panel></panel-card>
    <panel-card class="side"><detail-panel></detail-panel></panel-card>
  </main>
</div>`);
</script>
</body>
</html>
